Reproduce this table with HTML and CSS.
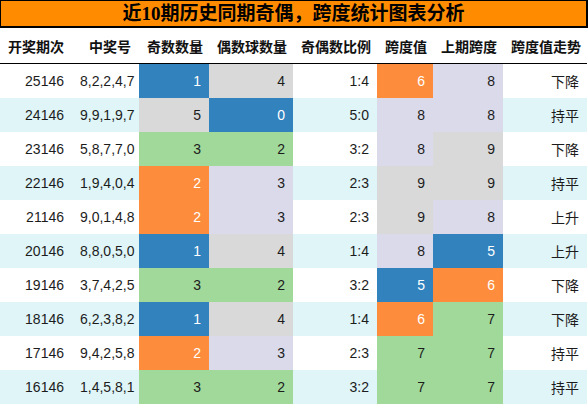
FILE: index.html
```html
<!DOCTYPE html>
<html lang="zh-CN">
<head>
<meta charset="UTF-8">
<meta name="viewport" content="width=device-width, initial-scale=1.0">
<title>近10期历史同期奇偶，跨度统计图表分析</title>
<link rel="stylesheet" href="styles.css">
</head>
<body>
  <div class="title">近10期历史同期奇偶，跨度统计图表分析</div>
  <table class="stats">
    <colgroup>
      <col style="width:72px"><col style="width:67px"><col style="width:70px"><col style="width:84px">
      <col style="width:84px"><col style="width:56px"><col style="width:70px"><col style="width:84px">
    </colgroup>
    <thead>
      <tr>
        <th>开奖期次</th><th>中奖号</th><th>奇数数量</th><th>偶数球数量</th>
        <th>奇偶数比例</th><th>跨度值</th><th>上期跨度</th><th>跨度值走势</th>
      </tr>
    </thead>
    <tbody>
      <tr>
        <td>25146</td><td>8,2,2,4,7</td><td class="blue">1</td><td class="grey">4</td>
        <td>1:4</td><td class="orange">6</td><td class="lav">8</td><td>下降</td>
      </tr>
      <tr>
        <td>24146</td><td>9,9,1,9,7</td><td class="grey">5</td><td class="blue">0</td>
        <td>5:0</td><td class="lav">8</td><td class="lav">8</td><td>持平</td>
      </tr>
      <tr>
        <td>23146</td><td>5,8,7,7,0</td><td class="green">3</td><td class="green">2</td>
        <td>3:2</td><td class="lav">8</td><td class="grey">9</td><td>下降</td>
      </tr>
      <tr>
        <td>22146</td><td>1,9,4,0,4</td><td class="orange">2</td><td class="lav">3</td>
        <td>2:3</td><td class="grey">9</td><td class="grey">9</td><td>持平</td>
      </tr>
      <tr>
        <td>21146</td><td>9,0,1,4,8</td><td class="orange">2</td><td class="lav">3</td>
        <td>2:3</td><td class="grey">9</td><td class="lav">8</td><td>上升</td>
      </tr>
      <tr>
        <td>20146</td><td>8,8,0,5,0</td><td class="blue">1</td><td class="grey">4</td>
        <td>1:4</td><td class="lav">8</td><td class="blue">5</td><td>上升</td>
      </tr>
      <tr>
        <td>19146</td><td>3,7,4,2,5</td><td class="green">3</td><td class="green">2</td>
        <td>3:2</td><td class="blue">5</td><td class="orange">6</td><td>下降</td>
      </tr>
      <tr>
        <td>18146</td><td>6,2,3,8,2</td><td class="blue">1</td><td class="grey">4</td>
        <td>1:4</td><td class="orange">6</td><td class="green">7</td><td>下降</td>
      </tr>
      <tr>
        <td>17146</td><td>9,4,2,5,8</td><td class="orange">2</td><td class="lav">3</td>
        <td>2:3</td><td class="green">7</td><td class="green">7</td><td>持平</td>
      </tr>
      <tr>
        <td>16146</td><td>1,4,5,8,1</td><td class="green">3</td><td class="green">2</td>
        <td>3:2</td><td class="green">7</td><td class="green">7</td><td>持平</td>
      </tr>
    </tbody>
  </table>
</body>
</html>
```

FILE: styles.css
```css
body {
  margin: 0;
  padding: 0;
  background-color: #fff;
  font-family: "Liberation Sans", "Noto Sans CJK SC", sans-serif;
  color: #1c1c1c;
}

/* Title bar */
.title {
  box-sizing: border-box;
  width: 588px;
  height: 28px;
  padding-top: 2px;
  background-color: #ff8c00;
  border: 1px solid #000;
  border-right-width: 2px;
  border-bottom-width: 2px;
  text-align: center;
  font-family: "Liberation Serif", "Noto Sans CJK SC", serif;
  font-size: 19px;
  font-weight: bold;
  line-height: 22px;
  color: #000;
}

/* Table */
.stats {
  width: 587px;
  border-collapse: collapse;
  table-layout: fixed;
  font-size: 14px;
}

.stats th,
.stats td {
  padding: 0 8px;
  text-align: right;
  white-space: nowrap;
}

.stats th {
  height: 35px;
  font-weight: bold;
  color: #111;
  border-bottom: 1px solid #000;
}

.stats td {
  height: 34px;
}

.stats tbody tr:nth-child(even) {
  background-color: #dff5f8;
}

/* Cell colours */
.blue { background-color: #3182bd; color: #fff; }
.orange { background-color: #fd8d3c; color: #fff; }
.grey { background-color: #d9d9d9; }
.lav { background-color: #dadaeb; }
.green { background-color: #a1d99b; }
```
